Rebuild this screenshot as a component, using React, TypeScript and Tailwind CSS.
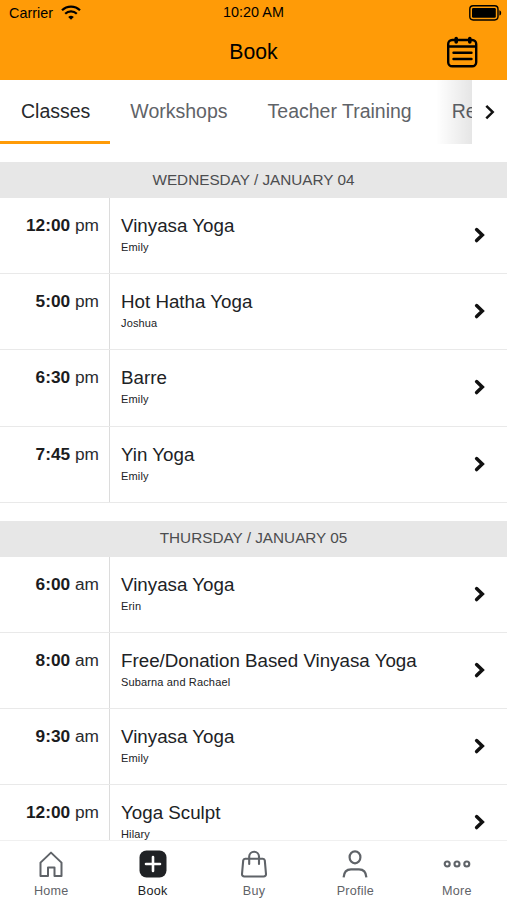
import React, { useState } from 'react';
import { clsx } from 'clsx';

type ClassItem = { time: string; period: 'am' | 'pm'; title: string; teacher: string };
type Day = { label: string; classes: ClassItem[] };

const TABS = ['Classes', 'Workshops', 'Teacher Training', 'Retreats'];

const DAYS: Day[] = [
  {
    label: 'WEDNESDAY / JANUARY 04',
    classes: [
      { time: '12:00', period: 'pm', title: 'Vinyasa Yoga', teacher: 'Emily' },
      { time: '5:00', period: 'pm', title: 'Hot Hatha Yoga', teacher: 'Joshua' },
      { time: '6:30', period: 'pm', title: 'Barre', teacher: 'Emily' },
      { time: '7:45', period: 'pm', title: 'Yin Yoga', teacher: 'Emily' },
    ],
  },
  {
    label: 'THURSDAY / JANUARY 05',
    classes: [
      { time: '6:00', period: 'am', title: 'Vinyasa Yoga', teacher: 'Erin' },
      { time: '8:00', period: 'am', title: 'Free/Donation Based Vinyasa Yoga', teacher: 'Subarna and Rachael' },
      { time: '9:30', period: 'am', title: 'Vinyasa Yoga', teacher: 'Emily' },
      { time: '12:00', period: 'pm', title: 'Yoga Sculpt', teacher: 'Hilary' },
    ],
  },
];

const WifiIcon = () => (
  <svg width="20" height="15" viewBox="0 0 20 15" fill="none" stroke="#000" strokeWidth="2.2">
    <path d="M1 5.3a12.8 12.8 0 0 1 18 0" />
    <path d="M4.2 8.7a8.2 8.2 0 0 1 11.6 0" />
    <path d="M10 14.8 7.200 12a4 4 0 0 1 5.600 0Z" fill="#000" stroke="none" />
  </svg>
);

const BatteryIcon = () => (
  <svg width="33" height="16" viewBox="0 0 33 16" fill="none">
    <rect x="0.8" y="0.8" width="28.2" height="14.2" rx="3.4" stroke="#000" strokeWidth="1.4" />
    <rect x="3" y="3" width="23.8" height="9.8" rx="1.2" fill="#000" />
    <path d="M30.4 5.2c1.2.4 1.8 1.5 1.8 2.7s-.6 2.3-1.8 2.7Z" fill="#000" />
  </svg>
);

const CalendarIcon = () => (
  <svg width="32" height="32" viewBox="0 0 32 32" fill="none" stroke="#000" strokeWidth="2.4" strokeLinecap="round">
    <rect x="2.2" y="4" width="28" height="26.2" rx="4" />
    <path d="M2.500 10.500h27.400M7.500 16.800h18M7.500 23h18" />
    <path d="M10.200 2.600v3.400M23.800 2.600v3.400" strokeWidth="3.600" />
  </svg>
);

const HomeIcon = () => (
  <svg width="28" height="28" viewBox="0 0 28 28" fill="none" stroke="currentColor" strokeWidth="2" strokeLinejoin="round">
    <path d="M3.500 12.600 14 2.600l10.500 10v13.400h-7v-8.400h-6.500v8.400h-7.500Z" />
  </svg>
);

const BookIcon = () => (
  <svg width="28" height="28" viewBox="0 0 28 28" fill="none">
    <rect x="0.5" y="0.5" width="27" height="27" rx="7" fill="#202225" />
    <path d="M14 7v14M7 14h14" stroke="#fff" strokeWidth="2.6" strokeLinecap="round" />
  </svg>
);

const BagIcon = () => (
  <svg width="28" height="28" viewBox="0 0 28 28" fill="none" stroke="currentColor" strokeWidth="2.100" strokeLinecap="round" strokeLinejoin="round">
    <path d="M5.200 8.800h17.600a2 2 0 0 1 2 1.700l1.200 13.500a2.300 2.300 0 0 1-2.300 2.500H4.300a2.300 2.300 0 0 1-2.300-2.500l1.200-13.500a2 2 0 0 1 2-1.700Z" />
    <path d="M9.200 14V6.600a4.900 4.900 0 0 1 9.800 0V14" />
  </svg>
);

const ProfileIcon = () => (
  <svg width="28" height="28" viewBox="0 0 28 28" fill="none" stroke="currentColor" strokeWidth="2.200">
    <ellipse cx="14" cy="7.300" rx="5.400" ry="6" />
    <path d="M2.600 27.400c.3-4.800 2.700-8.100 7.400-8.100h8c4.700 0 7.100 3.300 7.400 8.100" />
  </svg>
);

const MoreIcon = () => (
  <svg width="28" height="28" viewBox="0 0 28 28" fill="none" stroke="currentColor" strokeWidth="2.100">
    <circle cx="4.200" cy="14" r="2.500" />
    <circle cx="14" cy="14" r="2.500" />
    <circle cx="23.800" cy="14" r="2.500" />
  </svg>
);

const NAV = [
  { label: 'Home', Icon: HomeIcon },
  { label: 'Book', Icon: BookIcon },
  { label: 'Buy', Icon: BagIcon },
  { label: 'Profile', Icon: ProfileIcon },
  { label: 'More', Icon: MoreIcon },
];

const ClassRow: React.FC<{ item: ClassItem }> = ({ item }) => (
  <li className="flex h-[76.2px] border-b border-[#e9e9e9]">
    <div className="w-[110px] shrink-0 border-r border-[#dcdcdc] pr-[10px] pt-[16px] text-right text-[17.3px] leading-[22px] text-[#292b2e]">
      <b className="font-bold text-[#1b1c1e]">{item.time}</b> {item.period}
    </div>
    <div className="min-w-0 flex-1 pl-[11px] pt-[17px]">
      <h3 className="text-[18.75px] leading-[22px] text-[#202225]">{item.title}</h3>
      <p className="mt-[3px] text-[11px] leading-[14px] tracking-[0.15px] text-[#202225]">{item.teacher}</p>
    </div>
    <svg className="mr-[19px] mt-[28px]" width="16" height="18" viewBox="0 0 16 18" fill="none" stroke="#111" strokeWidth="3.5" strokeLinecap="round">
      <path d="m4.600 3.600 5.700 5.500-5.700 5.500" />
    </svg>
  </li>
);

export default function App() {
  const [activeTab, setActiveTab] = useState('Classes');
  const [page, setPage] = useState('Book');

  return (
    <div className="flex h-[900px] w-[507px] flex-col overflow-hidden bg-white font-['Liberation_Sans',Arial,sans-serif]">
      <header className="h-20 shrink-0 bg-[#ff9b07] text-black">
        <div className="grid h-[25px] grid-cols-[1fr_auto_1fr] items-center pl-[9px] pr-[5px] text-[14.4px] leading-[18px]">
          <div className="flex items-center gap-2">
            <span>Carrier</span>
            <WifiIcon />
          </div>
          <span className="-mt-px pr-1 text-center">10:20 AM</span>
          <div className="flex justify-end">
            <BatteryIcon />
          </div>
        </div>
        <div className="grid h-[54px] grid-cols-3 items-center">
          <h1 className="col-start-2 text-center text-[21.2px]">Book</h1>
          <button className="justify-self-end pr-[29px]" aria-label="Calendar">
            <CalendarIcon />
          </button>
        </div>
      </header>

      <div className="flex h-16 shrink-0">
        <nav className="relative flex w-[472px] overflow-hidden">
          {TABS.map(tab => (
            <button
              key={tab}
              onClick={() => setActiveTab(tab)}
              className={clsx(
                'shrink-0 whitespace-nowrap border-b-[3px] pr-5 pt-[3px] text-[19.5px]',
                tab === 'Classes' ? 'pl-[21px]' : 'pl-5',
                activeTab === tab ? 'border-[#ff9b07] text-[#27292c]' : 'border-transparent text-[#5f6368]'
              )}
            >
              {tab}
            </button>
          ))}
          <div className="pointer-events-none absolute inset-y-0 right-0 w-9 bg-gradient-to-r from-transparent to-black/10" />
        </nav>
        <button className="flex flex-1 items-center justify-center" aria-label="More tabs">
          <svg width="16" height="18" viewBox="0 0 16 18" fill="none" stroke="#111" strokeWidth="2.5">
            <path d="m4.300 2.800 6.400 6.300-6.400 6.300" />
          </svg>
        </button>
      </div>

      <main className="min-h-0 flex-1 overflow-hidden pt-[18px]">
        {DAYS.map(day => (
          <section key={day.label} className="mb-[18px]">
            <h2 className="flex h-9 items-center justify-center bg-[#e7e7e7] text-[15.3px] text-[#4c4d4f]">
              {day.label}
            </h2>
            <ul>
              {day.classes.map(item => (
                <ClassRow key={item.time + item.title} item={item} />
              ))}
            </ul>
          </section>
        ))}
      </main>

      <footer className="grid h-[60px] shrink-0 grid-cols-5 border-t border-[#f0f0f0] bg-white">
        {NAV.map(({ label, Icon }) => (
          <button
            key={label}
            onClick={() => setPage(label)}
            className={clsx(
              'flex flex-col items-center pl-px pt-[9px] text-[12.6px] leading-[16px] tracking-[0.25px]',
              page === label ? 'text-[#202225]' : 'text-[#5f6368]'
            )}
          >
            <Icon />
            <span className="mt-[5px]">{label}</span>
          </button>
        ))}
      </footer>
    </div>
  );
}
